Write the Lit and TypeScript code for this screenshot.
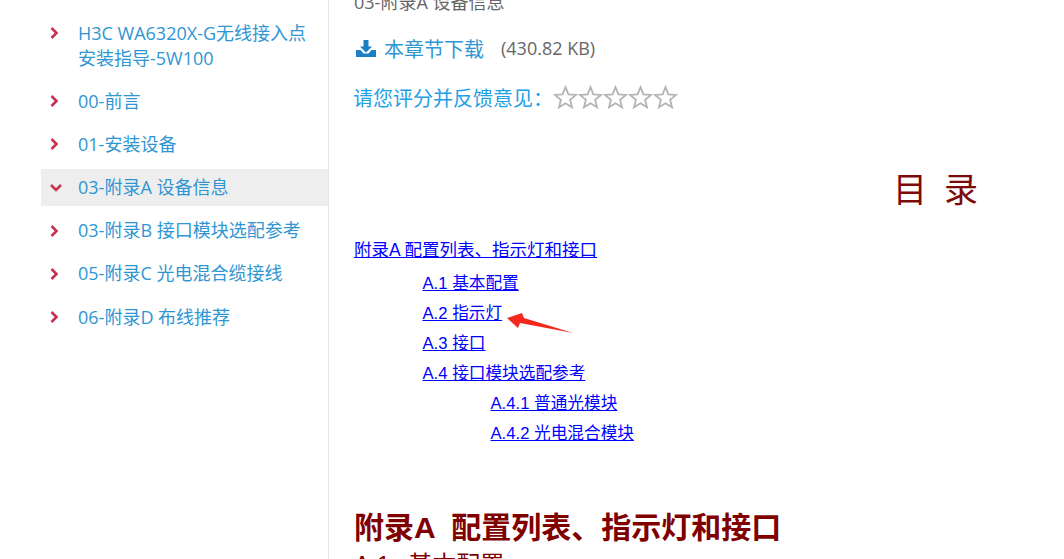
import { LitElement, html, css, svg } from "lit";
import { customElement } from "lit/decorators.js";

const items = [
  "H3C WA6320X-G无线接入点安装指导-5W100",
  "00-前言",
  "01-安装设备",
  "03-附录A 设备信息",
  "03-附录B 接口模块选配参考",
  "05-附录C 光电混合缆接线",
  "06-附录D 布线推荐",
];

const star = svg`<svg class="star" viewBox="0 0 25 24" width="25" height="24"><path d="M12.5 2.2l2.9 7.2 7.6.5-5.9 4.9 1.900 7.500-6.500-4.100-6.500 4.100 1.900-7.500L2 9.900l7.600-.5z" fill="none" stroke="#b4b4b4" stroke-width="1.8"/></svg>`;

@customElement("app-root")
export class AppRoot extends LitElement {
  static styles = css`
    :host {
      display: flex;
      width: 1064px;
      height: 559px;
      overflow: hidden;
      background: #fff;
      font-family: "Open Sans", "Noto Sans CJK SC", sans-serif;
    }
    .side {
      box-sizing: border-box;
      width: 329px;
      flex: none;
      height: 559px;
      border-right: 1px solid #e6e6e6;
      padding: 14.5px 0 0 41px;
      display: flex;
      flex-direction: column;
      gap: 6.2px;
    }
    .item {
      display: flex;
      padding: 6px 18px 6px 0;
      font-size: 18px;
      line-height: 25px;
      color: #2f96d3;
    }
    .item.on {
      background: #eeeeee;
    }
    .chev {
      flex: none;
      width: 37px;
      height: 25px;
      display: flex;
      align-items: center;
      padding-left: 8px;
      box-sizing: border-box;
    }
    .main {
      flex: 1;
      padding: 0 0 0 25px;
      min-width: 0;
    }
    .crumb {
      margin-top: -10px;
      font-size: 18px;
      line-height: 24px;
      color: #666;
    }
    .dl {
      display: flex;
      align-items: center;
      margin-top: 20px;
      height: 28px;
      font-size: 20px;
      color: #2f96d3;
    }
    .dl svg {
      margin: 0 8px 0 2px;
    }
    .size {
      margin-left: 17px;
      font-size: 18px;
      color: #666;
    }
    .rate {
      display: flex;
      align-items: center;
      margin: 21px 0 0 -1px;
      height: 28px;
      font-size: 20px;
      color: #1fa0e6;
    }
    .stars {
      display: flex;
    }
    .star {
      display: block;
    }
    .title {
      margin: 60px 86px 0 0;
      text-align: right;
      font-family: "Liberation Serif", "Noto Sans CJK SC", serif;
      font-size: 34px;
      line-height: 40px;
      color: #7d0a0a;
      white-space: pre;
    }
    .toc {
      margin-top: 24px;
      font-family: "Liberation Sans", "Noto Sans CJK SC", sans-serif;
      font-size: 16.67px;
      line-height: 30px;
    }
    .toc a {
      color: #0000ff;
      text-decoration: underline;
      white-space: pre;
    }
    .toc div {
      height: 30px;
    }
    .l1 {
      margin-bottom: 4px;
      font-size: 17.5px;
    }
    .l2 {
      padding-left: 68.5px;
      position: relative;
    }
    .l3 {
      padding-left: 136.5px;
    }
    .arrow {
      position: absolute;
      left: 153px;
      top: 12px;
    }
    h1 {
      margin: 61px 0 0;
      font-family: "Liberation Sans", "Noto Sans CJK SC", sans-serif;
      font-size: 30px;
      line-height: 36px;
      font-weight: 700;
      color: #800000;
      white-space: pre;
    }
    h2 {
      margin: 4px 0 0;
      font-family: "Liberation Sans", "Noto Sans CJK SC", sans-serif;
      font-size: 24px;
      line-height: 30px;
      font-weight: 400;
      word-spacing: 2.5px;
      color: #800000;
      white-space: pre;
    }
  `;

  private chevron(open: boolean) {
    return open
      ? html`<svg width="14" height="10" viewBox="0 0 14 10"><path d="M2 2l5 5 5-5" fill="none" stroke="#c8324f" stroke-width="2.6"/></svg>`
      : html`<svg width="10" height="14" viewBox="0 0 10 14"><path d="M2.500 2l5 5-5 5" fill="none" stroke="#c8324f" stroke-width="2.6"/></svg>`;
  }

  render() {
    return html`
      <aside class="side">
        ${items.map(
          (t, i) => html`<div class="item ${i === 3 ? "on" : ""}">
            <span class="chev">${this.chevron(i === 3)}</span><span>${t}</span>
          </div>`
        )}
      </aside>
      <main class="main">
        <div class="crumb">03-附录A 设备信息</div>
        <div class="dl">
          <svg width="20" height="19" viewBox="0 0 20 19"><path d="M7.500 1h5v6.500h3.500L10 13.500 4 7.500h3.500z" fill="#1c7fc4"/><path d="M0 11h4.500l3 3.500h5l3-3.500H20v7H0z" fill="#1c7fc4"/></svg>
          <span>本章节下载</span><span class="size">(430.82 KB)</span>
        </div>
        <div class="rate">
          <span>请您评分并反馈意见：</span>
          <span class="stars">${star}${star}${star}${star}${star}</span>
        </div>
        <div class="title">目  录</div>
        <div class="toc">
          <div class="l1"><a>附录A 配置列表、指示灯和接口</a></div>
          <div class="l2"><a>A.1 基本配置</a></div>
          <div class="l2"><a>A.2 指示灯</a>
            <svg class="arrow" width="70" height="24" viewBox="0 0 70 24"><path d="M0 7L15 2l2 5 49 15-53-10-2 5z" fill="#f5281e"/></svg>
          </div>
          <div class="l2"><a>A.3 接口</a></div>
          <div class="l2"><a>A.4 接口模块选配参考</a></div>
          <div class="l3"><a>A.4.1 普通光模块</a></div>
          <div class="l3"><a>A.4.2 光电混合模块</a></div>
        </div>
        <h1>附录A  配置列表、指示灯和接口</h1>
        <h2>A.1  基本配置</h2>
      </main>
    `;
  }
}
